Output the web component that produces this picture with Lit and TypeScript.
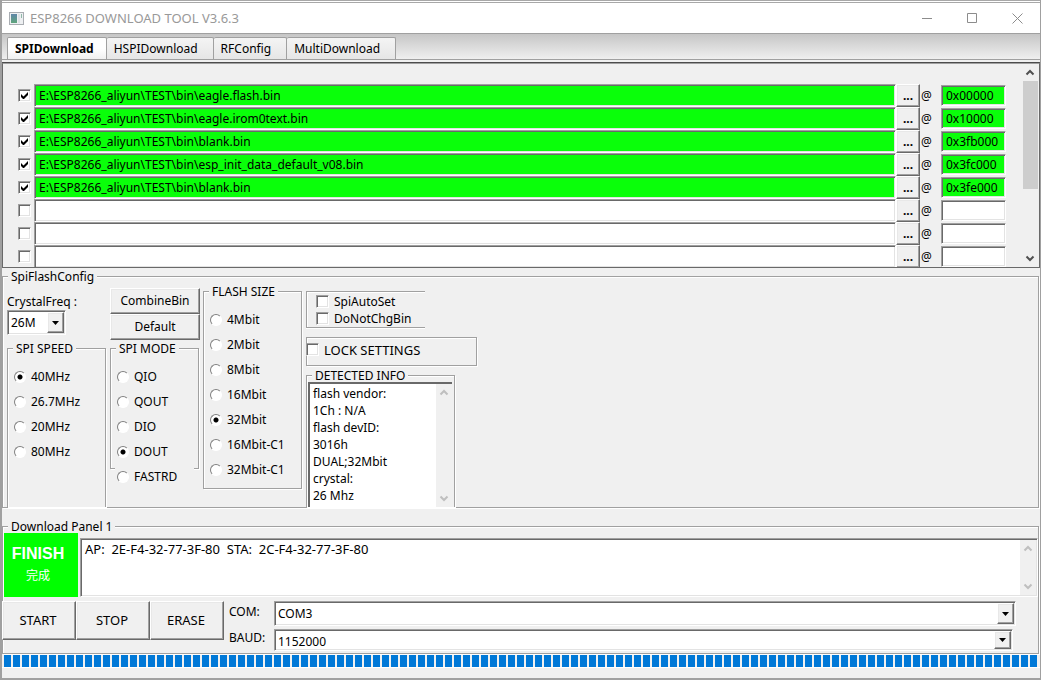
import { LitElement, html, css, svg } from "lit";
import { customElement, state, property } from "lit/decorators.js";
import { classMap } from "lit/directives/class-map.js";

interface FlashFile {
  path: string;
  addr: string;
  on: boolean;
}

const shared = css`
  *,
  *::before,
  *::after {
    box-sizing: border-box;
  }
  .sunk {
    border: 1px solid;
    border-color: #a0a0a0 #fff #fff #a0a0a0;
    box-shadow: inset 1px 1px 0 #696969, inset -1px -1px 0 #e3e3e3;
  }
  .raised {
    border: 1px solid;
    border-color: #fff #696969 #696969 #fff;
    box-shadow: inset -1px -1px 0 #a0a0a0, inset 1px 1px 0 #e8e8e8;
    background: #f0f0f0;
  }
  button,
  input,
  select,
  textarea {
    font: inherit;
    color: inherit;
    margin: 0;
    border-radius: 0;
    outline: none;
  }
`;

/** Vertical scroll bar strip with an optional thumb. */
@customElement("scroll-strip")
export class ScrollStrip extends LitElement {
  @property({ type: Boolean }) thumb = false;

  static styles = css`
    :host {
      display: flex;
      flex-direction: column;
      align-items: center;
      justify-content: space-between;
      width: 16px;
      flex: none;
      background: #f0f0f0;
      color: #bfbfbf;
    }
    :host([thumb]) {
      margin-right: 1px;
      color: #505050;
    }
    svg {
      display: block;
      width: 16px;
      height: 17px;
      flex: none;
    }
    .track {
      flex: 1;
      width: 15px;
    }
    .thumb {
      height: 64%;
      background: #cdcdcd;
    }
  `;

  render() {
    return html`
      <svg viewBox="0 0 16 17" aria-hidden="true">
        <path d="M4.5 10.5L8 7l3.5 3.5" fill="none" stroke="currentColor" stroke-width="2" />
      </svg>
      <div class="track">${this.thumb ? html`<div class="thumb"></div>` : ""}</div>
      <svg viewBox="0 0 16 17" aria-hidden="true">
        <path d="M4.5 6.5L8 10l3.5-3.5" fill="none" stroke="currentColor" stroke-width="2" />
      </svg>
    `;
  }
}

@customElement("app-root")
export class AppRoot extends LitElement {
  @state() private tab = "SPIDownload";
  @state() private files: FlashFile[] = [
    { path: "E:\\ESP8266_aliyun\\TEST\\bin\\eagle.flash.bin", addr: "0x00000", on: true },
    { path: "E:\\ESP8266_aliyun\\TEST\\bin\\eagle.irom0text.bin", addr: "0x10000", on: true },
    { path: "E:\\ESP8266_aliyun\\TEST\\bin\\blank.bin", addr: "0x3fb000", on: true },
    { path: "E:\\ESP8266_aliyun\\TEST\\bin\\esp_init_data_default_v08.bin", addr: "0x3fc000", on: true },
    { path: "E:\\ESP8266_aliyun\\TEST\\bin\\blank.bin", addr: "0x3fe000", on: true },
    { path: "", addr: "", on: false },
    { path: "", addr: "", on: false },
    { path: "", addr: "", on: false },
  ];

  static styles = [
    shared,
    css`
      :host {
        display: flex;
        flex-direction: column;
        min-height: 100vh;
        box-sizing: border-box;
        border: solid #a0a0a0;
        border-width: 0 1px 2px 2px;
        background: #f0f0f0;
        color: #000;
        font: 12px/16px "Noto Sans", "Noto Sans CJK SC", sans-serif;
      }

      /* title bar */
      .title {
        display: flex;
        align-items: center;
        height: 34px;
        border-top: 3px double #a8a8a8;
        border-bottom: 1px solid #a0a0a0;
        background: #fff;
        color: #999;
      }
      .title h1 {
        flex: 1;
        margin: 0;
        font-size: 13px;
        font-weight: 400;
      }
      .app-icon {
        width: 15px;
        height: 13px;
        margin: 0 6px 0 7px;
      }
      .win-btn {
        display: grid;
        place-items: center;
        width: 45px;
        height: 30px;
        padding: 0;
        border: 0;
        background: none;
      }

      /* tabs */
      .tabs {
        display: flex;
        align-items: flex-end;
        height: 26px;
        padding-left: 5px;
        border-bottom: 1px solid #a0a0a0;
        background: linear-gradient(#c6c6c6, #efefef);
      }
      .tab {
        height: 22px;
        padding: 0 15px 0 7px;
        border: 1px solid #a0a0a0;
        border-width: 1px 1px 0 0;
        border-radius: 2px 2px 0 0;
        background: linear-gradient(#f4f4f4, #e6e6e6);
        line-height: 21px;
      }
      .tab.active {
        padding: 0 12px 0 7px;
        border-left-width: 1px;
        background: linear-gradient(#fff 50%, #f0f0f0);
        font-weight: 700;
      }

      /* file list */
      .list {
        display: flex;
        height: 206px;
        margin-top: 2px;
        border: solid #696969;
        border-width: 2px 1px 1px;
        border-top: 2px groove #a0a0a0;
        overflow: hidden;
      }
      .rows {
        flex: 1;
        padding: 20px 16px 0 15px;
      }
      .row {
        display: flex;
        align-items: center;
        height: 23px;
      }
      .path {
        flex: 1;
        min-width: 0;
        height: 23px;
        margin-left: 3px;
        padding: 0 4px;
        background: #fff;
      }
      .addr {
        width: 65px;
        height: 21px;
        padding: 0 4px;
        background: #fff;
      }
      .green {
        background: #0aff0a;
      }
      .dots {
        width: 24px;
        height: 23px;
        padding: 0;
        font-weight: 700;
        line-height: 18px;
      }
      .at {
        width: 21px;
        padding-left: 1px;
      }

      .check,
      .radio {
        appearance: none;
        flex: none;
        width: 13px;
        height: 13px;
        background: #fff center / 11px 11px no-repeat;
      }
      .check {
        border: 1px solid;
        border-color: #a0a0a0 #fff #fff #a0a0a0;
        box-shadow: inset 1px 1px 0 #696969, inset -1px -1px 0 #e3e3e3;
      }
      .check:checked {
        background-image: url("data:image/svg+xml,%3Csvg xmlns='http://www.w3.org/2000/svg' viewBox='0 0 11 11'%3E%3Cpath d='M2 4v3l2 2h1l4-4V2L4.500 6.500z'/%3E%3C/svg%3E");
      }
      .radio {
        width: 12px;
        height: 12px;
        border: 1px solid;
        border-color: #808080 #fff #fff #808080;
        border-radius: 50%;
      }
      .radio:checked {
        background-image: radial-gradient(circle, #000 0 2px, transparent 3px);
      }

      /* group boxes */
      fieldset {
        min-width: 0;
        margin: 0;
        padding: 1px 0 0;
        border: 1px solid #a0a0a0;
        box-shadow: 1px 1px 0 #fff, inset 1px 1px 0 #fff;
      }
      legend {
        height: 15px;
        margin-left: 5px;
        padding: 0 3px;
        background: #f0f0f0;
        line-height: 16px;
      }
      .config {
        margin: 1px 1px 0 0;
      }
      .grid {
        display: flex;
        gap: 4px;
        height: 222px;
        padding-left: 4px;
      }
      .col {
        display: flex;
        flex-direction: column;
      }
      .col-speed {
        width: 99px;
        padding-top: 9px;
      }
      .col-mode {
        width: 90px;
        margin-right: -1px;
        padding-top: 3px;
      }
      .col-size {
        width: 99px;
        margin-top: -1px;
      }
      .col-info {
        padding-top: 6px;
      }
      .combo {
        display: flex;
        background: #fff;
        padding: 1px;
      }
      .combo select {
        appearance: none;
        flex: 1;
        min-width: 0;
        padding: 0 0 0 2px;
        border: 0;
        background: none;
      }
      .arrow {
        display: grid;
        place-items: center;
        width: 17px;
      }
      .crystal {
        width: 59px;
        height: 25px;
        margin-bottom: 6px;
      }
      .speed {
        flex: 1;
        border-bottom: 0;
      }
      .mode {
        width: 89px;
        height: 128px;
        margin-top: 1px;
      }
      .size {
        height: 205px;
      }
      .options {
        padding-top: 7px;
      }
      .option {
        display: flex;
        align-items: center;
        gap: 5px;
        height: 25px;
        margin: 0 4px;
        padding-left: 2px;
        background: #f0f0f0;
      }
      .tool {
        height: 26px;
        padding: 0;
      }
      .box {
        border: 1px solid #a0a0a0;
        box-shadow: 1px 1px 0 #fff, inset 1px 1px 0 #fff;
      }
      .auto {
        width: 119px;
        height: 37px;
        padding: 1px 0 0 9px;
        border-right: 0;
        box-shadow: 0 1px 0 #fff, inset 1px 1px 0 #fff;
      }
      .auto label,
      .lock label {
        display: flex;
        align-items: center;
        gap: 5px;
        height: 17px;
      }
      .lock {
        width: 171px;
        height: 29px;
        margin: 9px 0 2px;
        padding-top: 3px;
      }
      .lock label {
        margin-left: -1px;
        font-size: 13px;
      }
      .info {
        display: flex;
        flex: 1;
        width: 149px;
        border-bottom: 0;
      }
      .detected {
        display: flex;
        width: 144px;
        height: 125px;
        margin: -2px 0 0 1px;
        border: solid #696969;
        border-width: 2px 0 0 2px;
        background: #fff;
      }
      textarea {
        flex: 1;
        min-width: 0;
        border: 0;
        background: none;
        resize: none;
        overflow: hidden;
        line-height: 17px;
      }
      .detected textarea {
        padding: 1px 3px;
      }

      /* download panel */
      .panel {
        margin: 11px 1px 0 0;
      }
      .status {
        display: flex;
        align-items: flex-end;
        gap: 2px;
        margin-top: -2px;
        padding-left: 1px;
      }
      .finish {
        display: flex;
        flex-direction: column;
        align-items: center;
        gap: 4px;
        width: 74px;
        height: 64px;
        padding: 11px 6px 0 0;
        background: #00ff00;
        color: #fff;
      }
      .finish strong {
        font: 700 16px/20px "Liberation Sans", sans-serif;
      }
      .log {
        display: flex;
        flex: 1;
        height: 59px;
        padding: 1px;
        background: #fff;
      }
      .log textarea {
        padding: 1px 3px;
        font-size: 13px;
      }
      .actions {
        display: flex;
        align-items: flex-start;
        margin: 4px 0 2px -1px;
      }
      .action {
        width: 74px;
        height: 39px;
        padding: 0 2px 2px 0;
        font-size: 13px;
      }
      .ports {
        display: grid;
        grid-template-columns: 40px 1fr;
        column-gap: 5px;
        row-gap: 3px;
        flex: 1;
        padding: 0 22px 0 5px;
      }
      .com {
        height: 25px;
      }
      .baud {
        height: 22px;
        margin-right: 3px;
      }
      .baud select {
        padding-top: 3px;
      }
      .ports label {
        padding-top: 3px;
      }
      .ports label + .combo + label {
        padding-top: 1px;
      }
      .progress {
        height: 14px;
        padding: 1px 2px;
        border-bottom: 1px solid #fff;
      }
      .bar {
        height: 12px;
        background: repeating-linear-gradient(90deg, #0078d7 0 7px, #f0f0f0 7px 9px);
      }
    `,
  ];

  private toggle(i: number) {
    this.files = this.files.map((f, n) => (n === i ? { ...f, on: !f.on } : f));
  }

  private arrow() {
    return html`<span class="arrow raised"
      ><svg width="7" height="4" viewBox="0 0 7 4" aria-hidden="true">
        ${svg`<path d="M0 0h7L3.500 4z" fill="#000"/>`}
      </svg></span
    >`;
  }

  private radios(name: string, items: string[], chosen: string) {
    return html`<div class="options">
      ${items.map(
        (t) => html`<label class="option"
          ><input class="radio" type="radio" name=${name} .checked=${t === chosen} />${t}</label
        >`
      )}
    </div>`;
  }

  render() {
    return html`
      <header class="title">
        <svg class="app-icon" viewBox="0 0 15 13" aria-hidden="true">
          <defs>
            <linearGradient id="g" x1="0" y1="0" x2="0" y2="1">
              <stop offset="0" stop-color="#5f86a8" />
              <stop offset="1" stop-color="#5fa57c" />
            </linearGradient>
          </defs>
          <rect x=".5" y=".5" width="14" height="12" fill="#eef0f2" stroke="#a9adb2" />
          <rect x="2" y="2" width="6" height="9" fill="url(#g)" />
          <rect x="9" y="2" width="2" height="9" fill="#dde2e6" />
          <rect x="12" y="2" width="1" height="4" fill="#8fb8a8" />
        </svg>
        <h1>ESP8266 DOWNLOAD TOOL V3.6.3</h1>
        <button class="win-btn" aria-label="Minimize">
          <svg width="11" height="11"><path d="M0 5.500h10" stroke="#8c8c8c" /></svg>
        </button>
        <button class="win-btn" aria-label="Maximize">
          <svg width="11" height="11"><path d="M.5.5h9v9h-9z" fill="none" stroke="#8c8c8c" /></svg>
        </button>
        <button class="win-btn" aria-label="Close">
          <svg width="11" height="11"><path d="M.5.500l10 10m0-10l-10 10" stroke="#8c8c8c" /></svg>
        </button>
      </header>

      <nav class="tabs" role="tablist">
        ${["SPIDownload", "HSPIDownload", "RFConfig", "MultiDownload"].map(
          (t) => html`<button
            role="tab"
            class=${classMap({ tab: true, active: t === this.tab })}
            aria-selected=${t === this.tab ? "true" : "false"}
            @click=${() => (this.tab = t)}
          >
            ${t}
          </button>`
        )}
      </nav>

      <section class="list">
        <div class="rows">
          ${this.files.map(
            (f, i) => html`<div class="row">
              <input
                class="check"
                type="checkbox"
                aria-label="Use file ${i + 1}"
                .checked=${f.on}
                @change=${() => this.toggle(i)}
              />
              <input
                class=${classMap({ path: true, sunk: true, green: f.on })}
                aria-label="File ${i + 1} path"
                .value=${f.path}
              />
              <button class="dots raised">...</button>
              <label class="at" for="addr${i}">@</label>
              <input
                id="addr${i}"
                class=${classMap({ addr: true, sunk: true, green: f.on })}
                .value=${f.addr}
              />
            </div>`
          )}
        </div>
        <scroll-strip thumb></scroll-strip>
      </section>

      <fieldset class="config">
        <legend>SpiFlashConfig</legend>
        <div class="grid">
          <div class="col col-speed">
            <label for="crystal">CrystalFreq :</label>
            <div class="combo crystal sunk">
              <select id="crystal"><option>26M</option></select>${this.arrow()}
            </div>
            <fieldset class="speed">
              <legend>SPI SPEED</legend>
              ${this.radios("speed", ["40MHz", "26.7MHz", "20MHz", "80MHz"], "40MHz")}
            </fieldset>
          </div>
          <div class="col col-mode">
            <button class="tool raised">CombineBin</button>
            <button class="tool raised">Default</button>
            <fieldset class="mode">
              <legend>SPI MODE</legend>
              ${this.radios("mode", ["QIO", "QOUT", "DIO", "DOUT", "FASTRD"], "DOUT")}
            </fieldset>
          </div>
          <div class="col col-size">
            <fieldset class="size">
              <legend>FLASH SIZE</legend>
              ${this.radios(
                "size",
                ["4Mbit", "2Mbit", "8Mbit", "16Mbit", "32Mbit", "16Mbit-C1", "32Mbit-C1"],
                "32Mbit"
              )}
            </fieldset>
          </div>
          <div class="col col-info">
            <div class="box auto">
              <label><input class="check" type="checkbox" />SpiAutoSet</label>
              <label><input class="check" type="checkbox" />DoNotChgBin</label>
            </div>
            <div class="box lock">
              <label><input class="check" type="checkbox" />LOCK SETTINGS</label>
            </div>
            <fieldset class="info">
              <legend>DETECTED INFO</legend>
              <div class="detected">
                <textarea
                  readonly
                  aria-label="Detected info"
                  .value=${"flash vendor:\n1Ch : N/A\nflash devID:\n3016h\nDUAL;32Mbit\ncrystal:\n26 Mhz"}
                ></textarea>
                <scroll-strip></scroll-strip>
              </div>
            </fieldset>
          </div>
        </div>
      </fieldset>

      <fieldset class="panel">
        <legend>Download Panel 1</legend>
        <div class="status">
          <div class="finish"><strong>FINISH</strong><span>完成</span></div>
          <div class="log sunk">
            <textarea
              readonly
              aria-label="Log"
              .value=${"AP:  2E-F4-32-77-3F-80  STA:  2C-F4-32-77-3F-80"}
            ></textarea>
            <scroll-strip></scroll-strip>
          </div>
        </div>
        <div class="actions">
          <button class="action raised">START</button>
          <button class="action raised">STOP</button>
          <button class="action raised">ERASE</button>
          <div class="ports">
            <label for="com">COM:</label>
            <div class="combo com sunk">
              <select id="com"><option>COM3</option></select>${this.arrow()}
            </div>
            <label for="baud">BAUD:</label>
            <div class="combo baud sunk">
              <select id="baud"><option>1152000</option></select>${this.arrow()}
            </div>
          </div>
        </div>
      </fieldset>
      <div class="progress" role="progressbar" aria-label="Download progress" aria-valuenow="100">
        <div class="bar"></div>
      </div>
    `;
  }
}
